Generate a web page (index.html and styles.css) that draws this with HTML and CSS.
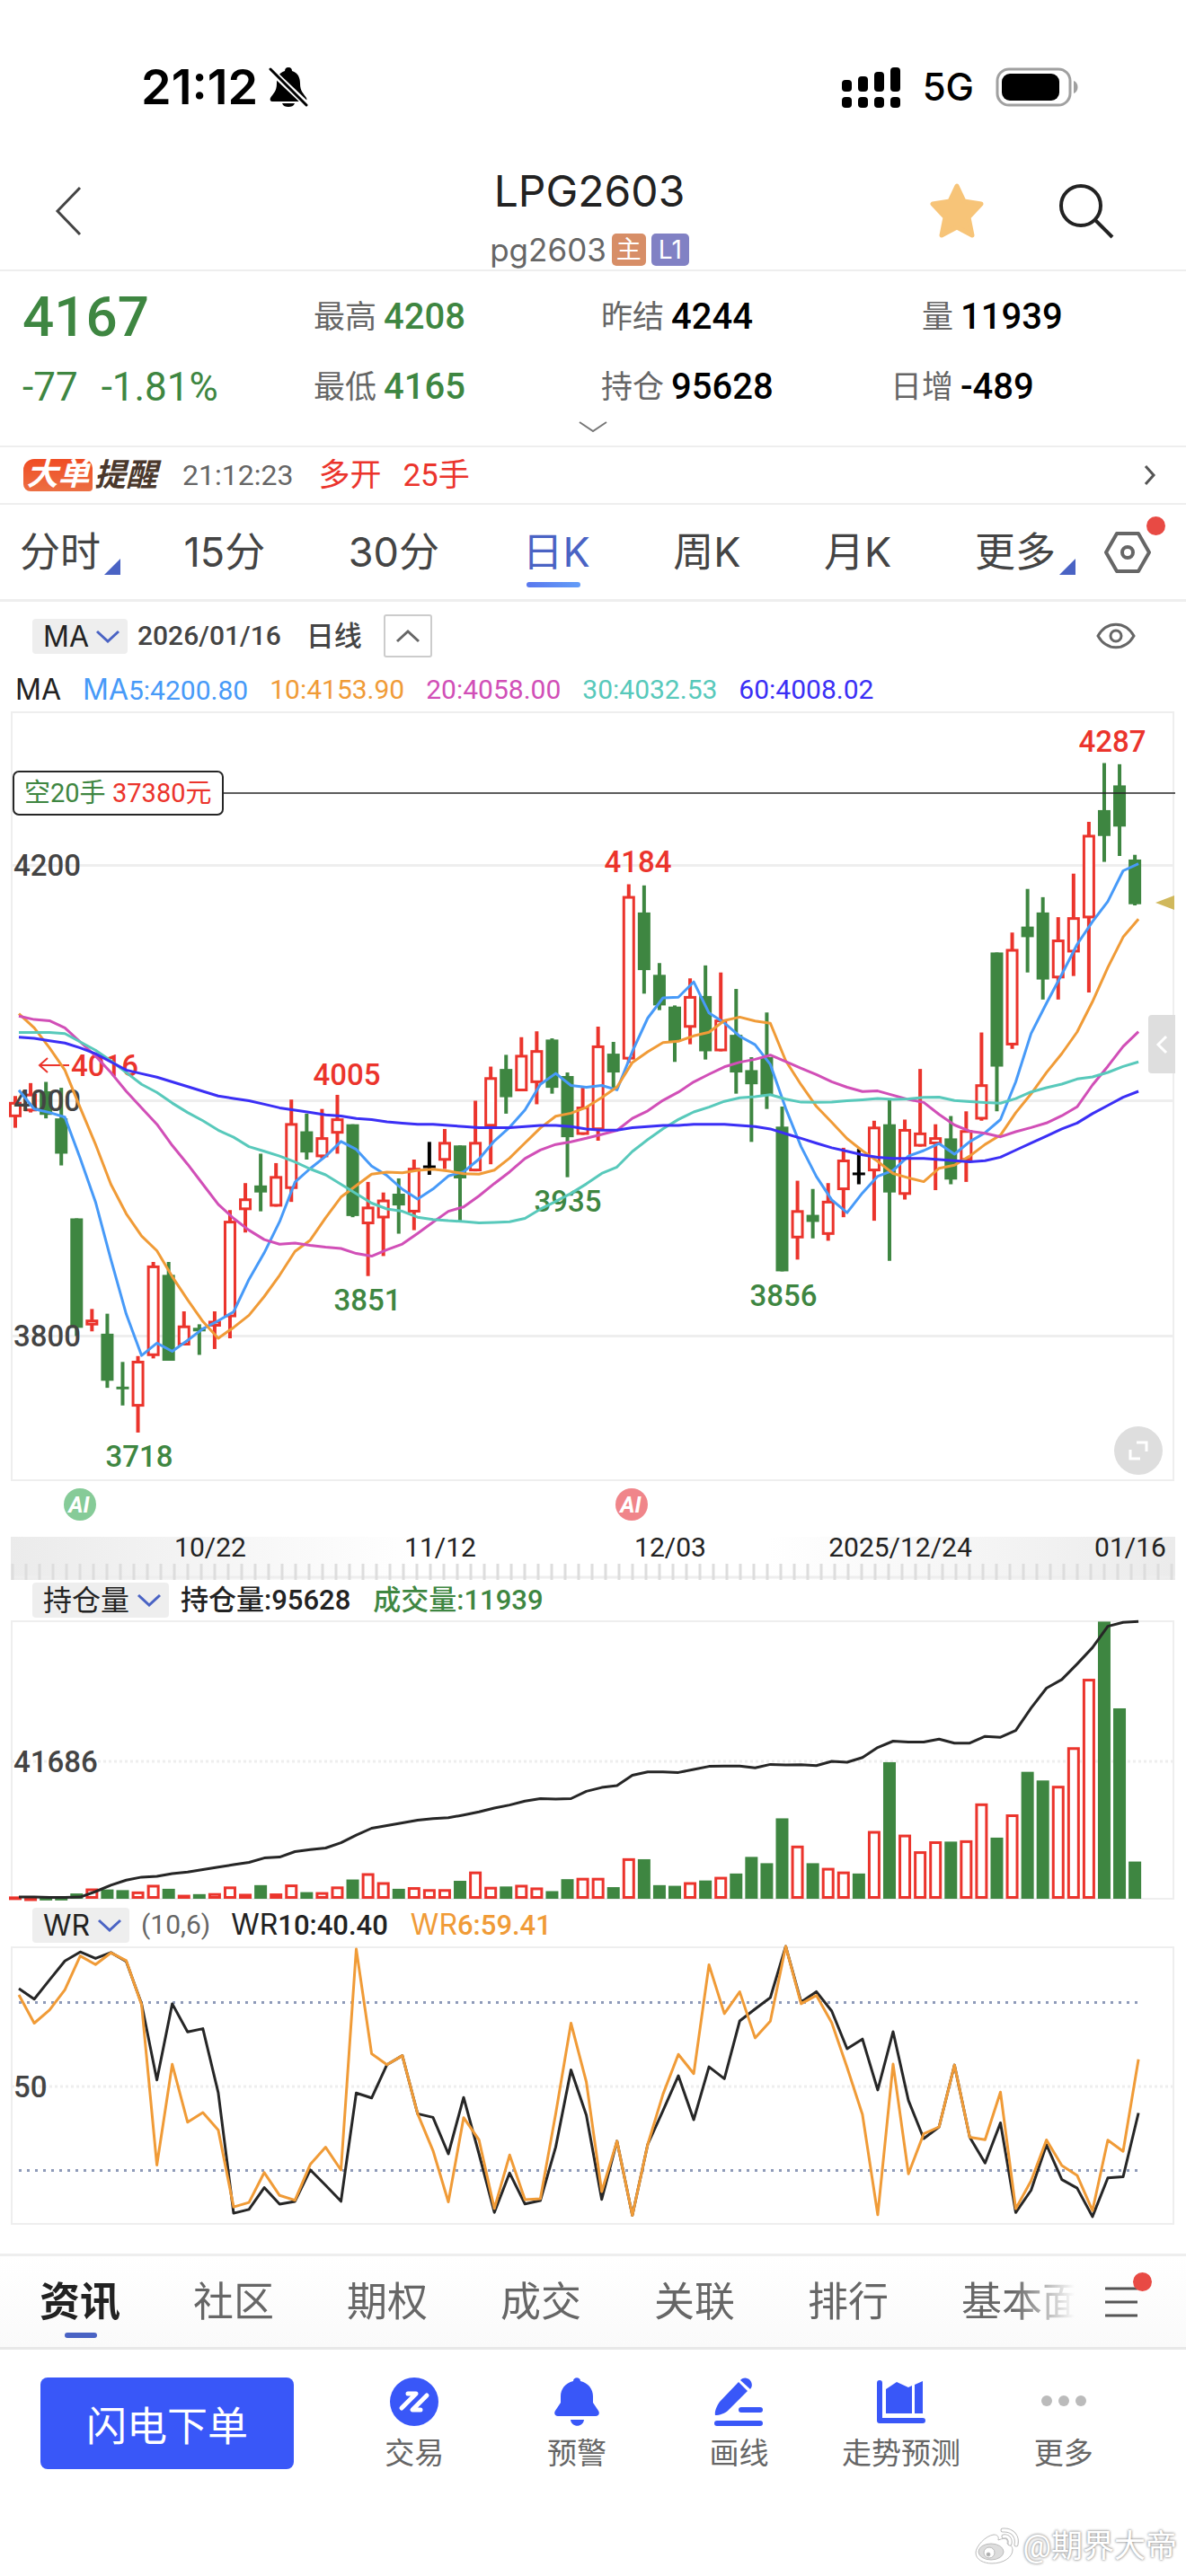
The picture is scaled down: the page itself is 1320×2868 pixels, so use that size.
FILE: index.html
```html
<!DOCTYPE html>
<html lang="zh-CN">
<head>
    <meta charset="UTF-8">
    <meta name="viewport" content="width=device-width, initial-scale=1.0">
    <title>LPG2603</title>
    <link rel="stylesheet" href="styles.css">
</head>
<body>
    <!-- Status bar -->
    <div class="status-bar">
        <span class="clock">21:12</span>
        <svg class="mute" width="44" height="46" viewBox="0 0 44 46">
            <path d="M22 1c-3 0-4 2-4 4C11 7 9 13 9 19c0 9-4 11-7 16-1 2 0 4 2 4h36c2 0 3-2 2-4-3-5-7-7-7-16 0-6-2-12-9-14 0-2-1-4-4-4zM15 41c1 3 4 4 7 4s6-1 7-4z"/>
            <path d="M1 3l41 39" stroke="#fff" stroke-width="7"/>
            <path d="M2 3l40 40" stroke="#000" stroke-width="3" stroke-linecap="round"/>
        </svg>
        <div class="status-right">
            <svg width="66" height="46" viewBox="0 0 66 46">
                <rect x="0" y="15" width="11" height="13" rx="4"/>
                <rect x="18" y="11" width="11" height="17" rx="4"/>
                <rect x="36" y="6" width="11" height="22" rx="4"/>
                <rect x="54" y="1" width="11" height="27" rx="4"/>
                <rect x="0" y="34" width="11" height="12" rx="4"/>
                <rect x="18" y="34" width="11" height="12" rx="4"/>
                <rect x="36" y="34" width="11" height="12" rx="4"/>
                <rect x="54" y="34" width="11" height="12" rx="4"/>
            </svg>
            <span class="network">5G</span>
            <svg width="93" height="44" viewBox="0 0 93 44">
                <rect x="2" y="2" width="81" height="40" rx="13" fill="none" stroke="#a0a0a0" stroke-width="3"/>
                <rect x="7" y="7" width="64" height="30" rx="9"/>
                <path d="M87 15c6 2 6 12 0 14z" fill="#a0a0a0"/>
            </svg>
        </div>
    </div>

    <!-- Title bar -->
    <header class="nav">
        <button class="icon-btn back" aria-label="返回">
            <svg width="32" height="56" viewBox="0 0 32 56"><path d="M29 2L4 28l25 26" fill="none" stroke="#444" stroke-width="3"/></svg>
        </button>
        <div class="nav-title">
            <h1>LPG2603</h1>
            <div class="code">pg2603 <span class="tag tag-main">主</span><span class="tag tag-level">L1</span></div>
        </div>
        <div class="nav-actions">
            <button class="icon-btn" aria-label="自选">
                <svg width="62" height="62" viewBox="0 0 62 62"><path d="M31 3l8 17 19 3-14 15 4 20-17-9-17 9 4-20L4 23l19-3z" fill="#f7c478" stroke="#f7c478" stroke-width="5" stroke-linejoin="round"/></svg>
            </button>
            <button class="icon-btn" aria-label="搜索">
                <svg width="62" height="62" viewBox="0 0 62 62"><circle cx="25" cy="25" r="22" fill="none" stroke="#222" stroke-width="4"/><path d="M41 41l19 19" stroke="#222" stroke-width="4"/></svg>
            </button>
        </div>
    </header>

    <!-- Quote -->
    <section class="quote">
        <div class="cell last">4167</div>
        <div class="cell"><span class="label">最高</span><b class="down">4208</b></div>
        <div class="cell"><span class="label">昨结</span><b>4244</b></div>
        <div class="cell"><span class="label">量</span><b>11939</b></div>
        <div class="cell change"><span>-77</span><span>-1.81%</span></div>
        <div class="cell"><span class="label">最低</span><b class="down">4165</b></div>
        <div class="cell"><span class="label">持仓</span><b>95628</b></div>
        <div class="cell"><span class="label">日增</span><b>-489</b></div>
    </section>
    <button class="icon-btn quote-more" aria-label="展开">
        <svg width="34" height="14" viewBox="0 0 34 14"><path d="M2 2l15 10L32 2" fill="none" stroke="#777" stroke-width="2"/></svg>
    </button>

    <!-- Big order alert -->
    <a class="big-order" href="#big-order">
        <span class="logo-box">大单</span><span class="logo-text">提醒</span>
        <span class="order-time">21:12:23</span>
        <span class="order-side">多开</span>
        <span class="order-side">25手</span>
        <svg class="order-arrow" width="14" height="24" viewBox="0 0 14 24"><path d="M2 2l9 10-9 10" fill="none" stroke="#555" stroke-width="3"/></svg>
    </a>

    <!-- Period tabs -->
    <nav class="periods">
        <div class="period-list">
            <a href="#time" class="has-menu">分时</a>
            <a href="#m15">15分</a>
            <a href="#m30">30分</a>
            <a href="#day" class="active">日K</a>
            <a href="#week">周K</a>
            <a href="#month">月K</a>
            <a href="#more" class="has-menu">更多</a>
        </div>
        <button class="icon-btn dot-btn" aria-label="设置">
            <svg width="52" height="48" viewBox="0 0 52 48"><path d="M14 3h24l12 21-12 21H14L2 24z" fill="none" stroke="#666" stroke-width="4" stroke-linejoin="round"/><circle cx="26" cy="24" r="6" fill="none" stroke="#666" stroke-width="4"/></svg>
        </button>
    </nav>

    <!-- Price chart -->
    <div class="chart-head">
        <label class="chip">
            <select aria-label="主图指标"><option>MA</option></select>
            <svg width="28" height="15" viewBox="0 0 28 15"><path d="M2 2l12 11L26 2" fill="none" stroke="#4a63c4" stroke-width="3"/></svg>
        </label>
        <span class="date">2026/01/16</span>
        <span class="kind">日线</span>
        <button class="fold" aria-label="收起">
            <svg width="28" height="16" viewBox="0 0 28 16"><path d="M2 14L14 3l12 11" fill="none" stroke="#666" stroke-width="3"/></svg>
        </button>
        <button class="icon-btn eye" aria-label="显示">
            <svg width="44" height="30" viewBox="0 0 44 30"><path d="M2 15C12-2 32-2 42 15 32 32 12 32 2 15z" fill="none" stroke="#666" stroke-width="3"/><circle cx="22" cy="15" r="6" fill="none" stroke="#666" stroke-width="3"/></svg>
        </button>
    </div>
    <div class="ma-values">
        <span class="en">MA</span>
        <span class="ma5"><span class="en">MA</span>5:4200.80</span>
        <span class="ma10">10:4153.90</span>
        <span class="ma20">20:4058.00</span>
        <span class="ma30">30:4032.53</span>
        <span class="ma60">60:4008.02</span>
    </div>
    <div class="chart-box">
        <svg id="priceChart" class="chart" viewBox="0 0 1320 970"></svg>
        <button class="side-tab" aria-label="侧栏">
            <svg width="14" height="22" viewBox="0 0 14 22"><path d="M12 2L3 11l9 9" fill="none" stroke="#fff" stroke-width="3"/></svg>
        </button>
        <button class="expand" aria-label="全屏">
            <svg width="24" height="24" viewBox="0 0 24 24"><path d="M10 3h11v10M14 21H3V11" fill="none" stroke="#fff" stroke-width="3"/></svg>
        </button>
    </div>

    <!-- Open interest and volume -->
    <div class="sub-head">
        <label class="chip">
            <select aria-label="副图一指标"><option>持仓量</option></select>
            <svg width="28" height="15" viewBox="0 0 28 15"><path d="M2 2l12 11L26 2" fill="none" stroke="#4a63c4" stroke-width="3"/></svg>
        </label>
        <span class="strong">持仓量:95628</span>
        <span class="strong down">成交量:11939</span>
    </div>
    <svg id="volumeChart" class="chart" viewBox="0 0 1320 320"></svg>

    <!-- Williams %R -->
    <div class="sub-head">
        <label class="chip">
            <select aria-label="副图二指标"><option>WR</option></select>
            <svg width="28" height="15" viewBox="0 0 28 15"><path d="M2 2l12 11L26 2" fill="none" stroke="#4a63c4" stroke-width="3"/></svg>
        </label>
        <span class="params">(10,6)</span>
        <span class="strong"><span class="en">WR</span>10:40.40</span>
        <span class="strong ma10"><span class="en">WR</span>6:59.41</span>
    </div>
    <svg id="wrChart" class="chart" viewBox="0 0 1320 345"></svg>

    <!-- Content tabs -->
    <nav class="sections">
        <div class="section-list">
            <a href="#news" class="active">资讯</a>
            <a href="#community">社区</a>
            <a href="#options">期权</a>
            <a href="#deals">成交</a>
            <a href="#related">关联</a>
            <a href="#rank">排行</a>
            <a href="#basics">基本面</a>
        </div>
        <button class="icon-btn dot-btn" aria-label="栏目">
            <svg width="36" height="34" viewBox="0 0 36 34"><path d="M0 2h36M0 17h36M0 32h36" stroke="#555" stroke-width="3"/></svg>
        </button>
    </nav>

    <!-- Toolbar -->
    <footer class="toolbar">
        <button class="order-btn">闪电下单</button>
        <div class="tools">
            <a href="#trade">
                <svg width="54" height="54" viewBox="0 0 54 54"><circle cx="27" cy="27" r="27" fill="#3957f8"/><path d="M20 18h9L13 34M41 20L25 36h9" fill="none" stroke="#fff" stroke-width="5" stroke-linecap="round" stroke-linejoin="round"/></svg>
                <span>交易</span>
            </a>
            <a href="#alert">
                <svg width="54" height="54" viewBox="0 0 54 54"><path d="M23 4c0-5 8-5 8 0 9 2 14 9 14 17v7l6 9c2 3 0 6-3 6H6c-3 0-5-3-3-6l6-9v-7C9 13 14 6 23 4zM20 47h15c-1 9-14 9-15 0z" fill="#3957f8"/></svg>
                <span>预警</span>
            </a>
            <a href="#draw">
                <svg width="54" height="54" viewBox="0 0 54 54"><path d="M27 5l10 10-21 21C12 40 6 42 1 42c-1-4 2-11 5-15zM29 3c7-7 17 3 11 10z" fill="#3957f8"/><path d="M30 36h21M3 51h48" stroke="#3957f8" stroke-width="6" stroke-linecap="round"/></svg>
                <span>画线</span>
            </a>
            <a href="#forecast">
                <svg width="54" height="54" viewBox="0 0 54 54"><path d="M3 6v42h48" fill="none" stroke="#3957f8" stroke-width="6" stroke-linecap="round" stroke-linejoin="round"/><path d="M10 13l12-8 13 6 4-2v31H10zM42 8l9-4v36h-9z" fill="#3957f8"/></svg>
                <span>走势预测</span>
            </a>
            <a href="#tools">
                <svg width="54" height="54" viewBox="0 0 54 54" fill="#bbb"><circle cx="8" cy="26" r="6"/><circle cx="27" cy="26" r="6"/><circle cx="46" cy="26" r="6"/></svg>
                <span>更多</span>
            </a>
        </div>
    </footer>
    <div class="watermark">
        <svg width="50" height="42" viewBox="0 0 50 42">
            <g fill="#fff" stroke="#bbb" stroke-width="1">
                <path d="M21 8c-9 1-20 13-20 20 0 8 9 12 18 12 13 0 23-7 23-15 0-4-3-6-6-7 1-4 0-8-10-4 1-4-1-6-5-6z"/>
                <ellipse cx="18" cy="27" rx="14" ry="9" fill="#ddd"/>
                <circle cx="16" cy="28" r="6"/>
                <circle cx="15" cy="30" r="2" fill="#aaa"/>
            </g>
            <path d="M31 3c10-1 17 6 15 16M32 10c5-1 8 3 7 8" fill="none" stroke="#bbb" stroke-width="5" stroke-linecap="round"/>
            <path d="M31 3c10-1 17 6 15 16M32 10c5-1 8 3 7 8" fill="none" stroke="#fff" stroke-width="3" stroke-linecap="round"/>
        </svg>
        <span>@期界大帝</span>
    </div>

    <script src="chart.js"></script>
</body>
</html>
```
FILE: styles.css
```css
* {
    box-sizing: border-box;
}
body {
    margin: 0;
    background-color: #fff;
    color: #222;
    font-family: Roboto, "Noto Sans CJK SC", sans-serif;
    font-size: 30px;
    line-height: 1;
}
a {
    color: inherit;
    text-decoration: none;
}
svg {
    display: block;
}
button {
    font-family: inherit;
    cursor: pointer;
}
.icon-btn {
    display: block;
    padding: 0;
    border: none;
    background: none;
}
.down {
    color: #3e8641;
}
.en {
    font-family: Inter, sans-serif;
    font-size: 32px;
    font-weight: 400;
}

/* Status bar */
.status-bar {
    display: flex;
    align-items: center;
    height: 184px;
    padding: 10px 119px 0 157px;
    font-family: Inter, sans-serif;
}
.clock {
    font-size: 54px;
    font-weight: 600;
    color: #000;
}
.mute {
    margin-left: 12px;
}
.status-right {
    display: flex;
    align-items: center;
    gap: 24px;
    margin-left: auto;
}
.network {
    font-size: 42px;
    font-weight: 500;
    color: #000;
}

/* Title bar */
.nav {
    display: grid;
    grid-template-columns: 1fr auto 1fr;
    align-items: start;
    height: 118px;
    padding: 0 80px 0 60px;
    border-bottom: 2px solid #eee;
    margin-bottom: 2px;
}
.nav-title {
    padding: 4px 0 0 12px;
    text-align: center;
}
.back {
    padding-top: 23px;
    justify-self: start;
}
.nav h1 {
    margin: 0;
    font-family: Inter, sans-serif;
    font-size: 48px;
    font-weight: 400;
    line-height: 50px;
}
.code {
    display: flex;
    align-items: center;
    justify-content: center;
    gap: 6px;
    margin-top: 22px;
    color: #666;
    font-family: Inter, "Noto Sans CJK SC", sans-serif;
    font-size: 35px;
    line-height: 36px;
}
.tag {
    padding: 0 5px;
    border-radius: 5px;
    color: #fff;
    font-size: 28px;
}
.tag-main {
    background-color: #d78e67;
}
.tag-level {
    padding: 0 8px;
    background-color: #8181c4;
}
.nav-actions {
    display: flex;
    gap: 82px;
    justify-content: flex-end;
    padding-top: 20px;
}

/* Quote */
.quote {
    display: grid;
    grid-template-columns: 324fr 320fr 322fr 329fr;
    grid-template-rows: 82px 74px;
    padding: 8px 0 0 25px;
}
.cell {
    display: flex;
    align-items: center;
    gap: 8px;
    font-size: 40px;
}
.cell b {
    font-weight: 500;
}
.quote b:not(.down) {
    color: #000;
}
.label {
    width: 70px;
    color: #666;
    font-size: 35px;
    text-align: right;
}
.last {
    color: #3e8641;
    font-size: 62px;
    font-weight: 500;
}
.change {
    gap: 26px;
    color: #3e8641;
    font-size: 44px;
}
.quote-more {
    margin: 0 auto;
    padding: 0 0 14px;
}

/* Big order alert */
.big-order {
    display: flex;
    align-items: center;
    height: 66px;
    padding: 0 33px 0 26px;
    border-top: 2px solid #eee;
    border-bottom: 2px solid #eee;
}
.logo-box {
    width: 77px;
    border-radius: 12px 10px 4px 8px;
    background: linear-gradient(#f04c23, #ec6f43);
    color: #fff;
    font-size: 35px;
    font-style: italic;
    font-weight: 700;
    line-height: 36px;
    text-align: center;
}
.logo-text {
    margin-left: 2px;
    color: #4a382c;
    font-size: 35px;
    font-style: italic;
    font-weight: 700;
}
.order-time {
    margin: 0 28px 0 28px;
    color: #666;
    font-size: 32px;
}
.order-side {
    margin-right: 24px;
    color: #eb342c;
    font-size: 35px;
}
.order-arrow {
    margin-left: auto;
}

/* Period tabs */
.periods {
    display: flex;
    align-items: center;
    justify-content: space-between;
    height: 108px;
    padding: 0 39px 0 22px;
    border-bottom: 3px solid #eee;
}
.period-list {
    display: flex;
    flex: 1;
    justify-content: space-between;
    height: 100%;
    margin-right: 54px;
    color: #444;
    font-family: Inter, "Noto Sans CJK SC", sans-serif;
    font-size: 45px;
    line-height: 106px;
}
.period-list a {
    position: relative;
}
.period-list .active {
    color: #4a63c4;
}
.period-list .active::after {
    content: "";
    position: absolute;
    bottom: 13px;
    left: 4px;
    width: 60px;
    height: 6px;
    border-radius: 3px;
    background: linear-gradient(90deg, #5a78ee, #639df8);
}
.has-menu::after {
    content: "";
    position: absolute;
    bottom: 27px;
    left: 94px;
    border-bottom: 18px solid #4a63c4;
    border-left: 18px solid transparent;
}
.dot-btn {
    position: relative;
}
.dot-btn::after {
    content: "";
    position: absolute;
    top: -16px;
    right: -16px;
    width: 21px;
    height: 21px;
    border-radius: 50%;
    background-color: #e84a44;
}

/* Chart headers */
.chart-head {
    display: flex;
    align-items: center;
    height: 76px;
    padding: 0 56px 0 36px;
}
.chip {
    position: relative;
}
.chip select {
    height: 39px;
    padding: 0 43px 0 12px;
    border: none;
    border-radius: 4px;
    appearance: none;
    background-color: #eee;
    color: #222;
    font-family: Inter, "Noto Sans CJK SC", sans-serif;
    font-size: 32px;
    line-height: 39px;
}
.chip svg {
    position: absolute;
    top: 12px;
    right: 8px;
    pointer-events: none;
}
.date {
    margin: 0 28px 0 11px;
    color: #444;
    font-weight: 500;
}
.kind {
    color: #444;
    font-size: 31px;
    font-weight: 500;
}
.fold {
    display: flex;
    align-items: center;
    justify-content: center;
    width: 54px;
    height: 48px;
    margin-left: 24px;
    padding: 0;
    border: 2px solid #ccc;
    border-radius: 3px;
    background-color: #fff;
}
.eye {
    margin-left: auto;
}
.ma-values {
    display: flex;
    align-items: center;
    gap: 24px;
    height: 44px;
    padding-left: 17px;
}
.ma5 {
    color: #479af8;
}
.ma10 {
    color: #f09b37;
}
.ma20 {
    color: #d14fb7;
}
.ma30 {
    color: #58c9bb;
}
.ma60 {
    color: #3b2ff5;
}
.sub-head {
    display: flex;
    align-items: center;
    gap: 13px;
    height: 42px;
    padding-left: 36px;
}
.sub-head .strong {
    margin-right: 12px;
    font-size: 31px;
    font-weight: 500;
}
.params {
    margin: 0 10px 0 0;
    color: #666;
}

/* Charts */
.chart-box {
    position: relative;
}
.chart {
    width: 100%;
    font-size: 33px;
}
.frame {
    fill: none;
    stroke: #eee;
    stroke-width: 2;
}
.grid {
    stroke: #eee;
    stroke-width: 3;
}
.dotted {
    stroke-dasharray: 3 3;
}
.limit {
    stroke: #8e9ab8;
    stroke-width: 3;
    stroke-dasharray: 3 6;
}
.axis-label {
    fill: #444;
    font-weight: 500;
}
.high {
    fill: #eb342c;
    font-weight: 500;
}
.low {
    fill: #3e8641;
    font-weight: 500;
}
.mid {
    text-anchor: middle;
}
.date-label {
    fill: #222;
    font-size: 30px;
    text-anchor: middle;
}
.badge {
    fill: #fff;
    font-size: 25px;
    font-style: italic;
    font-weight: 700;
    text-anchor: middle;
}
.position {
    font-size: 29px;
}
.line {
    fill: none;
    stroke-width: 3;
    stroke-linejoin: round;
}
.side-tab {
    position: absolute;
    top: 340px;
    right: 12px;
    width: 30px;
    height: 65px;
    padding: 0 0 0 8px;
    border: none;
    border-radius: 4px 0 0 4px;
    background-color: #dedede;
}
.expand {
    position: absolute;
    top: 798px;
    right: 26px;
    width: 54px;
    height: 54px;
    padding: 0 15px;
    border: none;
    border-radius: 50%;
    background-color: #dedede;
}

/* Content tabs */
.sections {
    display: flex;
    align-items: center;
    height: 107px;
    padding: 0 54px 0 44px;
    border-top: 3px solid #eee;
    border-bottom: 3px solid #e8e8e8;
    background: linear-gradient(#fff, #fafafa);
}
.section-list {
    display: flex;
    flex: 1;
    gap: 81px;
    height: 100%;
    margin-right: 34px;
    overflow: hidden;
    color: #666;
    font-size: 45px;
    line-height: 103px;
    white-space: nowrap;
    mask-image: linear-gradient(90deg, #000 94%, transparent);
}
.section-list a {
    position: relative;
}
.section-list .active {
    color: #222;
    font-weight: 700;
}
.section-list .active::after {
    content: "";
    position: absolute;
    bottom: 10px;
    left: 28px;
    width: 36px;
    height: 6px;
    border-radius: 3px;
    background-color: #4a63c4;
}

/* Toolbar */
.toolbar {
    display: flex;
    align-items: flex-start;
    padding: 31px 46px 0 45px;
}
.order-btn {
    width: 282px;
    height: 102px;
    border: none;
    border-radius: 8px;
    background-color: #3957f8;
    color: #fff;
    font-size: 45px;
}
.tools {
    display: grid;
    flex: 1;
    grid-template-columns: repeat(5, 1fr);
    margin-left: 44px;
}
.tools a {
    display: flex;
    flex-direction: column;
    align-items: center;
    gap: 14px;
    color: #666;
    font-size: 33px;
}
.watermark {
    display: flex;
    align-items: center;
    justify-content: flex-end;
    gap: 4px;
    margin-top: 65px;
    padding: 0 10px 12px;
    color: #fff;
    font-size: 35px;
    text-shadow: 0 0 3px #999, 0 0 3px #999;
}
```
FILE: chart.js
```js
// high, open/close top, open/close bottom, low, kind (r = up, g = down, k = flat)
const candles = [
    [4004, 3999, 3986, 3977, 'r'], [4015, 4006, 3991, 3990, 'r'], [4016, 4008, 3988, 3985, 'g'], [4011, 3985, 3955, 3945, 'g'],
    [3900, 3900, 3807, 3800, 'g'], [3823, 3814, 3809, 3804, 'r'], [3819, 3802, 3762, 3756, 'g'], [3778, 3757, 3755, 3741, 'g'],
    [3783, 3779, 3740, 3718, 'r'], [3863, 3860, 3783, 3781, 'r'], [3863, 3852, 3779, 3779, 'g'], [3821, 3809, 3792, 3792, 'r'],
    [3810, 3807, 3804, 3784, 'g'], [3821, 3813, 3808, 3789, 'r'], [3907, 3898, 3816, 3798, 'r'], [3930, 3917, 3907, 3888, 'r'],
    [3955, 3928, 3922, 3906, 'g'], [3947, 3936, 3910, 3910, 'r'], [4001, 3981, 3925, 3914, 'r'], [3989, 3974, 3956, 3950, 'g'],
    [3993, 3969, 3952, 3951, 'r'], [4005, 3985, 3972, 3955, 'r'], [3980, 3980, 3902, 3901, 'g'], [3931, 3910, 3895, 3851, 'r'],
    [3922, 3916, 3900, 3868, 'r'], [3934, 3921, 3911, 3887, 'g'], [3950, 3943, 3905, 3890, 'r'], [3965, 3945, 3943, 3937, 'k'],
    [3976, 3965, 3949, 3942, 'r'], [3962, 3962, 3934, 3898, 'g'], [4000, 3965, 3940, 3940, 'r'], [4029, 4020, 3978, 3946, 'r'],
    [4039, 4027, 4003, 3989, 'g'], [4054, 4039, 4008, 4008, 'r'], [4059, 4043, 4015, 3997, 'r'], [4053, 4052, 4011, 4006, 'g'],
    [4024, 4021, 3969, 3935, 'g'], [4011, 3995, 3971, 3971, 'r'], [4063, 4047, 3975, 3966, 'r'], [4050, 4040, 4024, 4010, 'g'],
    [4184, 4174, 4035, 4032, 'r'], [4183, 4160, 4111, 4091, 'g'], [4117, 4107, 4081, 4077, 'g'], [4081, 4080, 4050, 4033, 'g'],
    [4104, 4089, 4062, 4048, 'r'], [4115, 4089, 4042, 4035, 'g'], [4109, 4069, 4042, 4042, 'r'], [4095, 4056, 4024, 4006, 'g'],
    [4037, 4026, 4014, 3965, 'g'], [4075, 4037, 4005, 3993, 'g'], [3995, 3978, 3855, 3855, 'g'], [3932, 3907, 3883, 3865, 'r'],
    [3925, 3903, 3897, 3883, 'g'], [3930, 3915, 3886, 3881, 'r'], [3960, 3950, 3924, 3901, 'r'], [3959, 3939, 3938, 3929, 'k'],
    [3983, 3978, 3940, 3898, 'r'], [4002, 3980, 3922, 3864, 'g'], [3984, 3976, 3920, 3916, 'r'], [4027, 3973, 3961, 3961, 'r'],
    [3980, 3969, 3963, 3924, 'r'], [3987, 3968, 3933, 3929, 'g'], [3991, 3975, 3949, 3931, 'r'], [4058, 4014, 3984, 3983, 'r'],
    [4126, 4126, 4029, 3991, 'g'], [4143, 4129, 4047, 4044, 'r'], [4180, 4148, 4139, 4109, 'g'], [4173, 4160, 4103, 4086, 'g'],
    [4156, 4137, 4104, 4086, 'r'], [4193, 4156, 4126, 4106, 'r'], [4237, 4226, 4155, 4092, 'r'], [4287, 4247, 4225, 4203, 'g'],
    [4286, 4268, 4233, 4208, 'g'], [4209, 4205, 4167, 4166, 'g']
];

// volume in thousand lots
const volumes = [
    0.7, 0.4, 0.3, 0.3, 1.6, 3.1, 2.8, 2.6, 2.2, 4.2, 3, 1.2, 1.4, 1.7, 3.7, 1.5, 4.1, 1.6, 4.3, 2, 2, 3.7, 5.8, 7.7, 5,
    3, 3.5, 2.9, 2.9, 5.4, 8.2, 3.6, 3.7, 4.2, 3.4, 2.3, 5.9, 6.3, 6.3, 3.5, 12.2, 11.9, 4.1, 3.9, 5, 5.5, 6.6, 7.6, 12.6, 10.7,
    24.2, 16, 10.7, 9.3, 8.2, 7.6, 20.4, 41.1, 19.3, 14.3, 17.3, 17.2, 17.6, 28.7, 18.4, 25.4, 38.2, 35.6, 34, 45.6, 66.2, 83.4, 57.3, 11.2
];

// open interest, percent of the panel height
const interest = [
    0.6, 0.6, 0.5, 0.5, 0.6, 2.6, 4.9, 6.7, 7.8, 8.1, 9.1, 9.6, 10.5, 11.4, 12.3, 13.1, 14.7, 15, 17, 17.7, 18.3, 20.2, 22.9, 25.4, 26.4,
    27.3, 28.3, 28.9, 29.2, 30.2, 31.3, 32.7, 33.8, 35.2, 36.1, 35.9, 36.1, 38.7, 40.1, 40.8, 44.5, 45.7, 45.7, 45.5, 46.6, 47.7, 47.8, 47.8, 47.2, 48.4,
    48.2, 48.3, 48, 49.5, 49.2, 50.9, 54.5, 56.8, 56.5, 56.5, 57.5, 56.1, 56.1, 58.5, 58.2, 60.6, 68.7, 75.9, 79, 84.6, 90.5, 98.2, 99.6, 99.9
];

// averages for the days whose window starts before the first candle
const lead5 = [4009, 3993, 3990, 3986];
const lead10 = [4074, 4062, 4045, 4026, 3994, 3963, 3929, 3904, 3885];
const lead20 = [4072, 4069, 4068, 4062, 4050, 4038, 4024, 4008, 3994, 3980, 3962, 3946, 3929, 3912, 3900, 3890, 3882, 3878, 3879];
const lead30 = [
    4058, 4058, 4058, 4057, 4050, 4043, 4034, 4024, 4014, 4007, 3998, 3990, 3983, 3975, 3969,
    3961, 3957, 3953, 3948, 3942, 3937, 3929, 3921, 3913, 3908, 3906, 3901, 3899, 3898
];
const ma60 = [
    4054, 4053, 4051, 4049, 4045, 4040, 4033, 4026, 4023, 4020, 4016, 4012, 4008, 4004, 4002, 4000, 3997, 3994, 3992, 3990, 3988, 3987, 3985, 3984, 3982,
    3981, 3980, 3980, 3979, 3978, 3977, 3977, 3977, 3978, 3979, 3979, 3978, 3976, 3975, 3975, 3977, 3978, 3979, 3979, 3980, 3980, 3980, 3979, 3978, 3976,
    3972, 3968, 3964, 3960, 3957, 3954, 3952, 3951, 3951, 3951, 3950, 3949, 3948, 3949, 3952, 3958, 3964, 3970, 3976, 3981, 3989, 3996, 4003, 4008
];
const leadWr10 = [84.9, 81.2, 88, 94.8, 98, 95.7, 97.8, 94.6, 79.5];
const leadWr6 = [82.7, 72.6, 77.3, 84.5, 96.6];

const red = '#eb342c', green = '#3e8641', ink = '#262626';
const step = 17.07;
const barX = i => 17 + i * step;
const lineX = i => 21 + i * step;
const priceY = p => 173.5 + (4200 - p) * 1.31;
const closes = candles.map(c => c[4] === 'g' ? c[2] : c[1]);

function average(n, lead) {
    return closes.map((c, i) => i < lead.length ? lead[i]
        : closes.slice(i - n + 1, i + 1).reduce((a, b) => a + b, 0) / n);
}

function williams(n, lead) {
    return closes.map((c, i) => {
        if (i < lead.length) return lead[i];
        const part = candles.slice(i - n + 1, i + 1);
        const high = Math.max(...part.map(d => d[0]));
        const low = Math.min(...part.map(d => d[3]));
        return (high - c) / (high - low) * 100;
    });
}

function line(values, y, color) {
    const points = values.map((v, i) => `${lineX(i).toFixed(1)},${y(v).toFixed(1)}`).join(' ');
    return `<polyline class="line" points="${points}" stroke="${color}"/>`;
}

function bar(x, top, bottom, kind) {
    const h = Math.max(bottom - top, 3);
    if (kind === 'r') {
        return `<rect x="${x - 5.5}" y="${top + 1.5}" width="11" height="${Math.max(h - 3, 1)}" fill="#fff" stroke="${red}" stroke-width="3"/>`;
    }
    return `<rect x="${x - 7}" y="${top}" width="14" height="${h}" fill="${kind === 'k' ? '#000' : green}"/>`;
}

function drawPrice() {
    let s = '<rect class="frame" x="13" y="3" width="1293" height="855"/>';
    [4200, 4000, 3800].forEach(p => {
        s += `<line class="grid" x1="13" x2="1306" y1="${priceY(p)}" y2="${priceY(p)}"/>`;
    });
    candles.forEach((c, i) => {
        const color = c[4] === 'r' ? red : c[4] === 'g' ? green : '#000';
        const x = barX(i);
        s += `<line x1="${x}" x2="${x}" y1="${priceY(c[0])}" y2="${priceY(c[3])}" stroke="${color}" stroke-width="4"/>`;
        s += bar(x, priceY(c[1]), priceY(c[2]), c[4]);
    });
    [4200, 4000, 3800].forEach(p => {
        s += `<text class="axis-label" x="15" y="${priceY(p) + 11}">${p}</text>`;
    });
    s += `<text class="high mid" x="1238" y="47">4287</text>
        <text class="high mid" x="710" y="181">4184</text>
        <text class="high mid" x="386" y="418">4005</text>
        <text class="high" x="79" y="408">4016</text>
        <path d="M77 396H45M53 388l-9 8 9 8" fill="none" stroke="${red}" stroke-width="2"/>
        <text class="low mid" x="409" y="669">3851</text>
        <text class="low mid" x="155" y="843">3718</text>
        <text class="low mid" x="632" y="559">3935</text>
        <text class="low mid" x="872" y="664">3856</text>`;
    s += line(average(5, lead5), priceY, '#479af8');
    s += line(average(10, lead10), priceY, '#f09b37');
    s += line(average(20, lead20), priceY, '#d14fb7');
    s += line(average(30, lead30), priceY, '#58c9bb');
    s += line(ma60, priceY, '#3b2ff5');

    // open position and last price marker
    s += `<line x1="249" x2="1308" y1="93" y2="93" stroke="${ink}" stroke-width="1.5"/>
        <rect x="15" y="69" width="233" height="48" rx="6" fill="#fff" stroke="${ink}" stroke-width="2"/>
        <text class="position" x="27" y="103" fill="${green}">空20手</text>
        <text class="position" x="125" y="103" fill="${red}">37380元</text>
        <path d="M1286 215l21-8v16z" fill="#d0b85c"/>`;

    // signals
    s += `<circle cx="89" cy="885" r="18" fill="#86cb98"/><text class="badge" x="88" y="894">AI</text>
        <circle cx="703" cy="885" r="18" fill="#f0858a"/><text class="badge" x="702" y="894">AI</text>`;

    // date axis
    s += `<defs><linearGradient id="axisFill">
            <stop offset="0" stop-color="#ebebeb"/><stop offset="0.35" stop-color="#fff"/>
            <stop offset="0.65" stop-color="#fff"/><stop offset="1" stop-color="#ebebeb"/>
        </linearGradient></defs>
        <rect x="12" y="921" width="1296" height="48" fill="url(#axisFill)"/>
        <line class="grid" x1="12" x2="1308" y1="966" y2="966"/>`;
    for (let x = 14; x < 1308; x += 15) {
        s += `<line x1="${x}" x2="${x}" y1="951" y2="969" stroke="#ddd" stroke-width="3"/>`;
    }
    ['10/22', '11/12', '12/03', '2025/12/24', '01/16'].forEach((d, i) => {
        s += `<text class="date-label" x="${234 + i * 256}" y="943">${d}</text>`;
    });
    document.getElementById('priceChart').innerHTML = s;
}

function drawVolume() {
    let s = `<rect class="frame" x="13" y="3" width="1293" height="309"/>
        <line class="grid dotted" x1="13" x2="1306" y1="159" y2="159"/>
        <text class="axis-label" x="15" y="171">41686</text>`;
    volumes.forEach((v, i) => {
        const kind = i === 55 ? 'g' : candles[i][4] === 'k' ? 'r' : candles[i][4];
        s += bar(barX(i), 312 - v * 3.7, 312, kind);
    });
    s += line(interest, v => 312 - v * 3.09, ink);
    document.getElementById('volumeChart').innerHTML = s;
}

function drawWr() {
    const y = v => 315 - v * 3.12;
    let s = `<rect class="frame" x="13" y="4" width="1293" height="308"/>
        <line class="grid dotted" x1="13" x2="1306" y1="${y(50)}" y2="${y(50)}"/>
        <line class="limit" x1="21" x2="1267" y1="${y(80)}" y2="${y(80)}"/>
        <line class="limit" x1="21" x2="1267" y1="${y(20)}" y2="${y(20)}"/>
        <text class="axis-label" x="15" y="171">50</text>`;
    s += line(williams(10, leadWr10), y, ink);
    s += line(williams(6, leadWr6), y, '#f09b37');
    document.getElementById('wrChart').innerHTML = s;
}

drawPrice();
drawVolume();
drawWr();
```
